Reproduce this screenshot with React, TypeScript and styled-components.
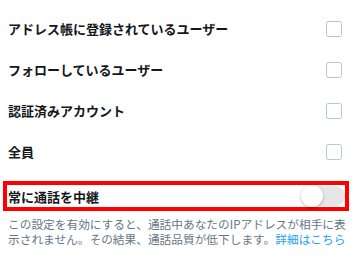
import React from "react";
import styled, { createGlobalStyle } from "styled-components";

const GlobalStyle = createGlobalStyle`
  html, body {
    margin: 0;
    padding: 0;
    background: #ffffff;
  }
  body {
    font-family: "Noto Sans CJK JP", "Noto Sans", sans-serif;
    -webkit-font-smoothing: antialiased;
  }
`;

const Page = styled.div`
  width: 353px;
  padding-top: 8px;
`;

const Row = styled.label`
  display: flex;
  align-items: center;
  justify-content: space-between;
  height: 41px;
  padding: 0 11px 0 8px;
`;

const Label = styled.span`
  font-size: 13px;
  font-weight: 700;
  color: #14171a;
  line-height: 1;
`;

const Checkbox = styled.span`
  box-sizing: border-box;
  width: 16px;
  height: 16px;
  border: 1.5px solid #b3c6d3;
  border-radius: 2.5px;
  background: #ffffff;
`;

const RelayBox = styled.div`
  display: flex;
  align-items: center;
  justify-content: space-between;
  height: 22px;
  margin: 9px 4px 0 3px;
  padding-left: 1px;
  border: 4px solid #ff0000;
`;

const Track = styled.span`
  position: relative;
  display: block;
  width: 44px;
  height: 20px;
  border-radius: 10px;
  background: #e6e6e6;
`;

const Knob = styled.span`
  position: absolute;
  left: 0;
  top: -1px;
  width: 22px;
  height: 22px;
  border-radius: 50%;
  background: #ffffff;
  box-shadow: 0 1px 3px rgba(0, 0, 0, 0.3);
`;

const Note = styled.p`
  margin: 5px 0 0;
  padding: 0 4px 0 8px;
  font-size: 11.7px;
  line-height: 15px;
  color: #657786;
`;

const More = styled.a`
  color: #1da1f2;
  text-decoration: none;
`;

const options = [
  "アドレス帳に登録されているユーザー",
  "フォローしているユーザー",
  "認証済みアカウント",
  "全員",
];

export default function App() {
  return (
    <Page>
      <GlobalStyle />
      {options.map((text) => (
        <Row key={text}>
          <Label>{text}</Label>
          <Checkbox />
        </Row>
      ))}
      <RelayBox>
        <Label>常に通話を中継</Label>
        <Track>
          <Knob />
        </Track>
      </RelayBox>
      <Note>
        この設定を有効にすると、通話中あなたのIPアドレスが相手に表示されません。その結果、通話品質が低下します。
        <More href="#">詳細はこちら</More>
      </Note>
    </Page>
  );
}
